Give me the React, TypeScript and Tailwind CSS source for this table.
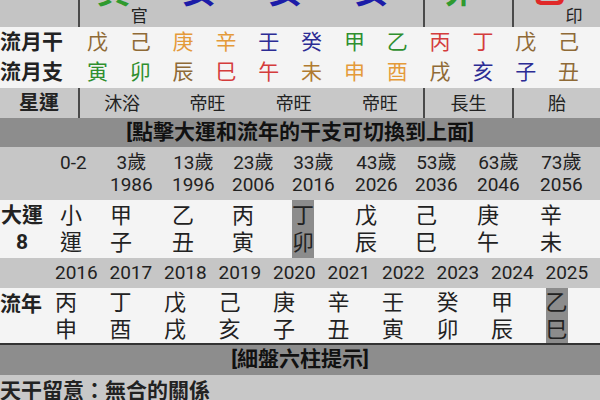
import clsx from "clsx";

const wood = "text-[#2f8f2f]";
const fire = "text-[#d43c3c]";
const earth = "text-[#8f6a36]";
const metal = "text-[#e49a3a]";
const water = "text-[#2c2c94]";

const topCells = [
  { ch: "寅", color: "text-[#2f9a2f]", tag: "官" },
  { ch: "亥", color: "text-[#1c1ca8]", tag: "" },
  { ch: "亥", color: "text-[#1c1ca8]", tag: "" },
  { ch: "亥", color: "text-[#1c1ca8]", tag: "" },
  { ch: "卯", color: "text-[#2f9a2f]", tag: "" },
  { ch: "巳", color: "text-[#e02828]", tag: "印" },
];

const monthStems: [string, string][] = [
  ["戊", earth], ["己", earth], ["庚", metal], ["辛", metal], ["壬", water], ["癸", water],
  ["甲", wood], ["乙", wood], ["丙", fire], ["丁", fire], ["戊", earth], ["己", earth],
];

const monthBranches: [string, string][] = [
  ["寅", wood], ["卯", wood], ["辰", earth], ["巳", fire], ["午", fire], ["未", "text-[#b07a30]"],
  ["申", metal], ["酉", metal], ["戌", earth], ["亥", water], ["子", water], ["丑", earth],
];

const starLuck = ["沐浴", "帝旺", "帝旺", "帝旺", "長生", "胎"];

const bigLuck = [
  { age: "0-2", year: "", top: "小", bottom: "運" },
  { age: "3歲", year: "1986", top: "甲", bottom: "子" },
  { age: "13歲", year: "1996", top: "乙", bottom: "丑" },
  { age: "23歲", year: "2006", top: "丙", bottom: "寅" },
  { age: "33歲", year: "2016", top: "丁", bottom: "卯", active: true },
  { age: "43歲", year: "2026", top: "戊", bottom: "辰" },
  { age: "53歲", year: "2036", top: "己", bottom: "巳" },
  { age: "63歲", year: "2046", top: "庚", bottom: "午" },
  { age: "73歲", year: "2056", top: "辛", bottom: "未" },
];

const years = [
  { year: "2016", top: "丙", bottom: "申" },
  { year: "2017", top: "丁", bottom: "酉" },
  { year: "2018", top: "戊", bottom: "戌" },
  { year: "2019", top: "己", bottom: "亥" },
  { year: "2020", top: "庚", bottom: "子" },
  { year: "2021", top: "辛", bottom: "丑" },
  { year: "2022", top: "壬", bottom: "寅" },
  { year: "2023", top: "癸", bottom: "卯" },
  { year: "2024", top: "甲", bottom: "辰" },
  { year: "2025", top: "乙", bottom: "巳", active: true },
];

const pillarCols = "grid grid-cols-[78px_repeat(4,86.25px)_89px_1fr]";
const luckCols = "grid grid-cols-[60px_50px_62px_60px_60px_63px_60px_62px_63px_1fr]";
const yearCols = "grid grid-cols-[55px_repeat(10,54.5px)]";

function Pair({ top, bottom, active }: { top: string; bottom: string; active?: boolean }) {
  return (
    <div
      className={clsx(
        "flex h-full w-[22px] flex-col justify-center text-[22px] leading-[27px]",
        active && "bg-[#8c8c8c]"
      )}
    >
      <span>{top}</span>
      <span>{bottom}</span>
    </div>
  );
}

export default function App() {
  return (
    <div className="flex h-[400px] w-[600px] flex-col overflow-hidden bg-[#c8c8c8] font-['Roboto','Noto_Sans_CJK_TC',sans-serif] text-[#222]">
      {/* natal pillars, scrolled off the top */}
      <div className={clsx(pillarCols, "h-[27px] shrink-0 grid-rows-[27px] overflow-hidden bg-[#c4c4c4]")}>
        <div />
        {topCells.map((c, i) => (
          <div
            key={i}
            className={clsx(
              "flex items-end justify-center",
              (i === 0 || i === 4 || i === 5) && "border-l-2 border-[#4a4a4a]"
            )}
          >
            <span className={clsx("mb-[19px] text-[34px] font-bold leading-[34px]", c.color)}>{c.ch}</span>
            <span className="mb-[1px] w-[17px] text-[17px] leading-[20px]">{c.tag}</span>
          </div>
        ))}
      </div>

      {/* monthly stems / branches */}
      <div className="shrink-0 bg-[#f4f4f4]">
        <div className="grid h-[30px] grid-cols-[76px_repeat(12,1fr)] items-center pr-[10px]">
          <div className="text-[21px] font-bold">流月干</div>
          {monthStems.map(([ch, c], i) => (
            <div key={i} className={clsx("text-center text-[21px]", c)}>{ch}</div>
          ))}
        </div>
        <div className="grid h-[31px] grid-cols-[76px_repeat(12,1fr)] items-center pr-[10px]">
          <div className="text-[21px] font-bold">流月支</div>
          {monthBranches.map(([ch, c], i) => (
            <div key={i} className={clsx("text-center text-[21px]", c)}>{ch}</div>
          ))}
        </div>
      </div>

      {/* star luck */}
      <div className={clsx(pillarCols, "h-[30px] shrink-0 items-stretch bg-[#c8c8c8] text-[18px]")}>
        <div className="flex items-center justify-center text-[20px] font-bold">星運</div>
        {starLuck.map((s, i) => (
          <div
            key={i}
            className={clsx(
              "flex items-center justify-center",
              (i === 0 || i === 4 || i === 5) && "border-l-2 border-[#4a4a4a]"
            )}
          >
            {s}
          </div>
        ))}
      </div>

      <div className="flex h-[29px] shrink-0 items-center justify-center bg-[#8d8d8d] text-[21px] font-bold text-[#111]">
        [點擊大運和流年的干支可切換到上面]
      </div>

      {/* big luck ages */}
      <div className={clsx(luckCols, "h-[53px] shrink-0 bg-[#c6c6c6] pt-[5px] text-[19px] leading-[22px]")}>
        <div />
        {bigLuck.map((b, i) => (
          <div key={i}>
            <div className="inline-flex flex-col items-center">
              <span>{b.age}</span>
              {b.year && <span>{b.year}</span>}
            </div>
          </div>
        ))}
      </div>

      {/* big luck pillars */}
      <div className={clsx(luckCols, "h-[58px] shrink-0 bg-[#f4f4f4]")}>
        <div className="flex w-[44px] flex-col items-center justify-center text-[21px] font-bold leading-[27px]">
          <span>大運</span>
          <span>8</span>
        </div>
        {bigLuck.map((b, i) => (
          <div key={i}>
            <Pair top={b.top} bottom={b.bottom} active={b.active} />
          </div>
        ))}
      </div>

      {/* years */}
      <div className={clsx(yearCols, "h-[30px] shrink-0 items-center bg-[#c6c6c6] text-[19px]")}>
        <div />
        {years.map((y) => (
          <div key={y.year}>{y.year}</div>
        ))}
      </div>

      {/* yearly pillars */}
      <div className={clsx(yearCols, "h-[57px] shrink-0 border-b-2 border-[#333] bg-[#f4f4f4]")}>
        <div className="pt-[3px] text-[21px] font-bold leading-[26px]">流年</div>
        {years.map((y) => (
          <div key={y.year}>
            <Pair top={y.top} bottom={y.bottom} active={y.active} />
          </div>
        ))}
      </div>

      <div className="flex h-[30px] shrink-0 items-center justify-center bg-[#8d8d8d] text-[21px] font-bold text-[#111]">
        [細盤六柱提示]
      </div>

      <div className="flex-1 bg-[#c8c8c8] pt-[3px] text-[21px] font-bold leading-[26px]">
        天干留意：無合的關係
      </div>
    </div>
  );
}
